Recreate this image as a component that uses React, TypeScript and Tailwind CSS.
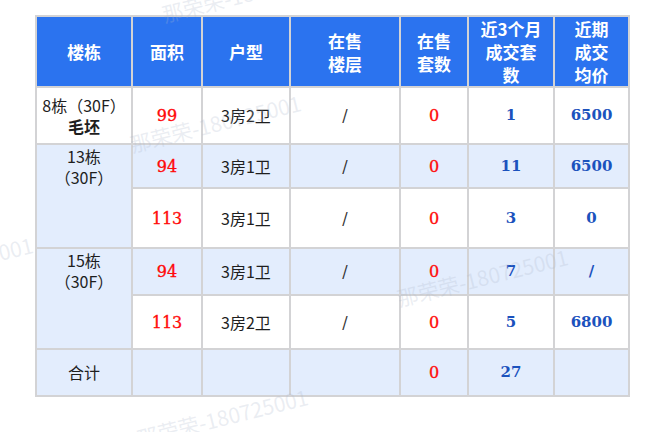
import React from "react";

const CJK = "font-['Noto_Sans_CJK_SC',sans-serif]";
const NUM = "font-['DejaVu_Serif','Noto_Sans_CJK_SC',serif]";

function H({ children }: { children: React.ReactNode }) {
  return (
    <div className={`bg-[#2b73ef] text-white font-bold text-[17px] leading-[23px] flex items-center justify-center text-center ${CJK}`}>
      <div>{children}</div>
    </div>
  );
}

function C({
  children,
  light,
  kind = "text",
  className = "",
}: {
  children?: React.ReactNode;
  light?: boolean;
  kind?: "text" | "red" | "blue" | "slash";
  className?: string;
}) {
  const color =
    kind === "red"
      ? "text-[#ff0a0a] " + NUM + " text-[16px] [-webkit-text-stroke:0.35px_#ff0a0a]"
      : kind === "blue"
      ? "text-[#1b52bd] font-semibold " + NUM + " text-[15px]"
      : kind === "slash"
      ? "text-[#333] text-[16px] " + NUM
      : "text-[#1e1e1e] text-[16px] " + CJK;
  return (
    <div
      className={`${light ? "bg-[#e3edfd]" : "bg-white"} flex items-center justify-center text-center leading-[21px] ${color} ${className}`}
    >
      <div>{children}</div>
    </div>
  );
}

function Mark({ className }: { className: string }) {
  return (
    <div
      className={`absolute pointer-events-none whitespace-nowrap text-[21px] text-[#aeb8cc]/25 -rotate-[14deg] ${CJK} ${className}`}
    >
      那荣荣-180725001
    </div>
  );
}

export default function App() {
  return (
    <div className="relative w-[654px] h-[432px] overflow-hidden bg-white pt-[15px] pl-[35px]">
      <div className="grid w-[595px] grid-cols-[94px_68px_86px_108px_66px_84px_73px] grid-rows-[69px_55px_42px_58px_45px_52px_45px] gap-[2px] p-[2px] bg-[#d3d3d5]">
        <H>楼栋</H>
        <H>面积</H>
        <H>户型</H>
        <H>
          在售
          <br />
          楼层
        </H>
        <H>
          在售
          <br />
          套数
        </H>
        <H>
          近3个月
          <br />
          成交套
          <br />数
        </H>
        <H>
          近期
          <br />
          成交
          <br />
          均价
        </H>

        {/* row 1 */}
        <C>
          8栋（30F）
          <br />
          <span className="font-bold">毛坯</span>
        </C>
        <C kind="red">99</C>
        <C>3房2卫</C>
        <C kind="slash">/</C>
        <C kind="red">0</C>
        <C kind="blue">1</C>
        <C kind="blue">6500</C>

        {/* row 2-3 */}
        <C light className="row-span-2 !items-start pt-[1px]">
          13栋
          <br />
          （30F）
        </C>
        <C light kind="red">94</C>
        <C light>3房1卫</C>
        <C light kind="slash">/</C>
        <C light kind="red">0</C>
        <C light kind="blue">11</C>
        <C light kind="blue">6500</C>

        <C kind="red">113</C>
        <C>3房1卫</C>
        <C kind="slash">/</C>
        <C kind="red">0</C>
        <C kind="blue">3</C>
        <C kind="blue">0</C>

        {/* row 4-5 */}
        <C light className="row-span-2 !items-start pt-[1px]">
          15栋
          <br />
          （30F）
        </C>
        <C light kind="red">94</C>
        <C light>3房1卫</C>
        <C light kind="slash">/</C>
        <C light kind="red">0</C>
        <C light kind="blue">7</C>
        <C light kind="blue">/</C>

        <C kind="red">113</C>
        <C>3房2卫</C>
        <C kind="slash">/</C>
        <C kind="red">0</C>
        <C kind="blue">5</C>
        <C kind="blue">6800</C>

        {/* total */}
        <C light>合计</C>
        <C light />
        <C light />
        <C light />
        <C light kind="red">0</C>
        <C light kind="blue">27</C>
        <C light />
      </div>

      <Mark className="left-[128px] top-[108px]" />
      <Mark className="left-[395px] top-[262px]" />
      <Mark className="left-[135px] top-[402px]" />
      <Mark className="left-[-140px] top-[250px]" />
      <Mark className="left-[160px] top-[-22px]" />
    </div>
  );
}
